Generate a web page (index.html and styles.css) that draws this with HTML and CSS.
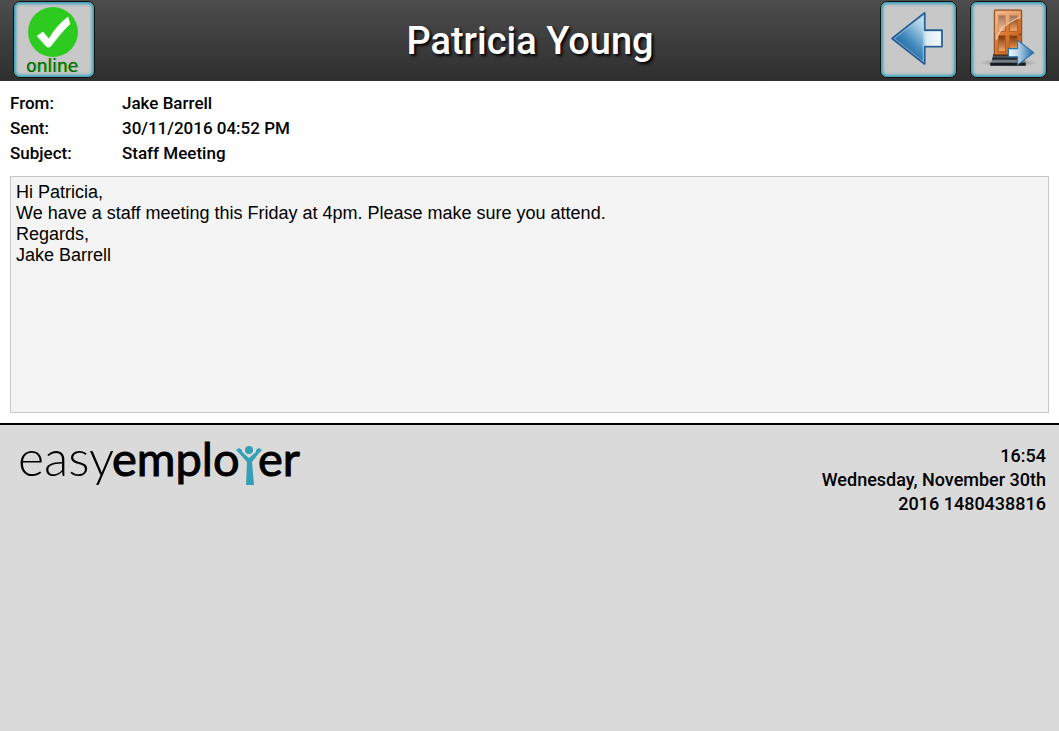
FILE: index.html
```html
<!doctype html>
<html lang="en">
	<head>
		<meta charset="UTF-8" />
		<meta name="viewport" content="width=device-width, initial-scale=1.0" />
		<title>Patricia Young - easyemployer</title>
		<link rel="stylesheet" href="styles.css">
	</head>
	<body>
		<header class="header">
			<div class="header-left">
				<button type="button" class="tile tile-status">
					<svg class="status-icon" viewBox="0 0 52 51" aria-hidden="true">
						<circle cx="27" cy="25" r="25" fill="#2dcb20" />
						<path d="M11 29l6-4 6 7c5-9 11-16 19-22l2 7C36 24 30 33 24 40h-3z" fill="#fff" stroke="#d5f3d2" stroke-width="1" />
					</svg>
					<span class="status-text">online</span>
				</button>
			</div>
			<h1 class="title">Patricia Young</h1>
			<div class="header-right">
				<button type="button" class="tile" aria-label="Back">
					<svg class="tile-icon" viewBox="0 0 72 72" aria-hidden="true">
						<defs>
							<linearGradient id="backFill" x1="0" y1="1" x2="1" y2="0">
								<stop offset="0.2" stop-color="#17609c" />
								<stop offset="0.4" stop-color="#4189bd" />
								<stop offset="0.65" stop-color="#a9cfe6" />
								<stop offset="1" stop-color="#f2f8fb" />
							</linearGradient>
							<linearGradient id="backTail" x1="0" y1="0" x2="1" y2="0">
								<stop offset="0.6" stop-color="#fff" stop-opacity="0" />
								<stop offset="0.7" stop-color="#dcecf4" />
								<stop offset="1" stop-color="#f4f9fb" />
							</linearGradient>
						</defs>
						<path d="M10 35L42 10V27H59V43H42V60z" fill="url(#backFill)" stroke="#215c93" stroke-width="2" stroke-linejoin="round" />
						<path d="M12 35L41 12V28H58V42H41V58z" fill="url(#backTail)" stroke="#fff" stroke-opacity="0.35" />
					</svg>
				</button>
				<button type="button" class="tile" aria-label="Log out">
					<svg class="tile-icon" viewBox="0 0 72 72" aria-hidden="true">
						<defs>
							<linearGradient id="wood" x1="0" y1="0" x2="1" y2="1">
								<stop offset="0" stop-color="#ed9b5a" />
								<stop offset="0.5" stop-color="#d9772f" />
								<stop offset="1" stop-color="#b9581b" />
							</linearGradient>
							<linearGradient id="panel" x1="0" y1="0" x2="0" y2="1">
								<stop offset="0" stop-color="#7c3208" />
								<stop offset="1" stop-color="#f3ac70" />
							</linearGradient>
							<linearGradient id="exitFill" x1="0" y1="0" x2="1" y2="0">
								<stop offset="0" stop-color="#f4f9fb" />
								<stop offset="0.35" stop-color="#bddbed" />
								<stop offset="1" stop-color="#1d68a5" />
							</linearGradient>
							<radialGradient id="shade">
								<stop offset="0" stop-color="#777" />
								<stop offset="1" stop-color="#777" stop-opacity="0" />
							</radialGradient>
						</defs>
						<ellipse cx="36" cy="59" rx="29" ry="4" fill="url(#shade)" />
						<path d="M21 51H51L52 55H20z" fill="#4b535c" />
						<path d="M20 55H52L53 59H19z" fill="#747d86" />
						<path d="M18 59H53V62H18z" fill="#14191f" />
						<path d="M20 54H52V56H20zM21 50H51V52H21z" fill="#20262d" />
						<rect x="22" y="7" width="27" height="44" rx="1" fill="url(#wood)" stroke="#8a4517" />
						<g fill="url(#panel)" stroke="#b55f23">
							<rect x="26" y="12" width="7" height="16" />
							<rect x="37" y="12" width="8" height="16" />
							<rect x="26" y="32" width="7" height="16" />
							<rect x="37" y="32" width="8" height="16" />
						</g>
						<path d="M23 8H48V14C37 18 27 25 24 36H23z" fill="#fff" opacity="0.3" />
						<path d="M24 36C27 25 37 18 48 14" fill="none" stroke="#fff" stroke-opacity="0.65" />
						<circle cx="47" cy="31" r="1" fill="#70401c" />
						<path d="M36 45H45V37L61 49L45 61V53H36z" fill="url(#exitFill)" stroke="#2b70aa" stroke-linejoin="round" />
					</svg>
				</button>
			</div>
		</header>

		<main class="message">
			<dl class="details">
				<dt>From:</dt>
				<dd>Jake Barrell</dd>
				<dt>Sent:</dt>
				<dd>30/11/2016 04:52 PM</dd>
				<dt>Subject:</dt>
				<dd>Staff Meeting</dd>
			</dl>
			<div class="message-body">
				Hi Patricia,<br />
				We have a staff meeting this Friday at 4pm. Please make sure you attend.<br />
				Regards,<br />
				Jake Barrell
			</div>
		</main>

		<footer class="footer">
			<svg class="logo" viewBox="0 0 284 56" role="img" aria-label="easyemployer">
				<text class="logo-light" x="-2" y="40">easy</text>
				<text class="logo-dark" x="92" y="40">emplo</text>
				<text class="logo-dark" x="238" y="40">er</text>
				<g fill="#349fb5">
					<circle cx="229" cy="14" r="4" />
					<path d="M216 14l3-2 3 2v2l7 6 7-6v-2l3-2 3 2-3 3-7 9 2 23h-8l1-23-8-9z" />
				</g>
			</svg>
			<div class="clock">
				<div>16:54</div>
				<div>Wednesday, November 30th</div>
				<div>2016 1480438816</div>
			</div>
		</footer>
	</body>
</html>
```

FILE: styles.css
```css
* {
	margin: 0;
	padding: 0;
	box-sizing: border-box;
}

body {
	font-family: "Franklin Gothic Medium", Roboto, "Liberation Sans", sans-serif;
	font-weight: 500;
	background: #dadada;
	color: #000;
	min-height: 100vh;
}

.header {
	display: grid;
	grid-template-columns: 1fr auto 1fr;
	align-items: center;
	padding: 1px 12px 3px 13px;
	background: linear-gradient(#4d4d4d, #2e2e2e);
}

.header-right {
	display: flex;
	justify-content: flex-end;
	gap: 13px;
}

.title {
	padding-top: 2px;
	color: #fff;
	font-size: 38px;
	font-weight: 500;
	line-height: 48px;
	text-shadow: 2px 2px 3px #000;
}

.tile {
	display: block;
	width: 77px;
	height: 77px;
	padding: 1px;
	border: 1px solid #111;
	border-radius: 7px;
	background: #c8c8c8;
	box-shadow: inset 0 0 3px 2px #35a0b8;
	cursor: pointer;
}

.tile-icon {
	display: block;
	width: 100%;
}

.tile-status {
	display: flex;
	flex-direction: column;
	align-items: center;
	justify-content: flex-start;
	width: 82px;
	padding: 5px 4px 0 0;
}

.status-icon {
	width: 52px;
	height: 51px;
}

.status-text {
	font-family: "DejaVu Sans", sans-serif;
	font-size: 17px;
	line-height: 17px;
	color: #155c10;
	text-shadow: 1px 0 0 #2dcb20;
}

.message {
	padding: 10px;
	background: #fff;
	border-bottom: 2px solid #000;
}

.details {
	display: grid;
	grid-template-columns: 112px 1fr;
	margin-bottom: 10px;
	font-size: 17px;
	line-height: 25px;
}

.message-body {
	min-height: 237px;
	padding: 5px;
	border: 1px solid #c8c8c8;
	background: #f4f4f4;
	font-family: "Liberation Sans", Arial, sans-serif;
	font-size: 18px;
	font-weight: 400;
	line-height: 21px;
}

.footer {
	display: flex;
	justify-content: space-between;
	align-items: flex-start;
	padding: 11px 13px 10px 20px;
}

.logo {
	width: 284px;
	height: 56px;
	overflow: visible;
}

.logo-light,
.logo-dark {
	font-family: Lato, sans-serif;
}

.logo-light {
	font-size: 50px;
	font-weight: 300;
}

.logo-dark {
	font-size: 47px;
	font-weight: 400;
	stroke: #000;
	stroke-width: 1px;
}

.clock {
	padding-top: 8px;
	font-size: 18px;
	line-height: 24px;
	text-align: right;
}
```
